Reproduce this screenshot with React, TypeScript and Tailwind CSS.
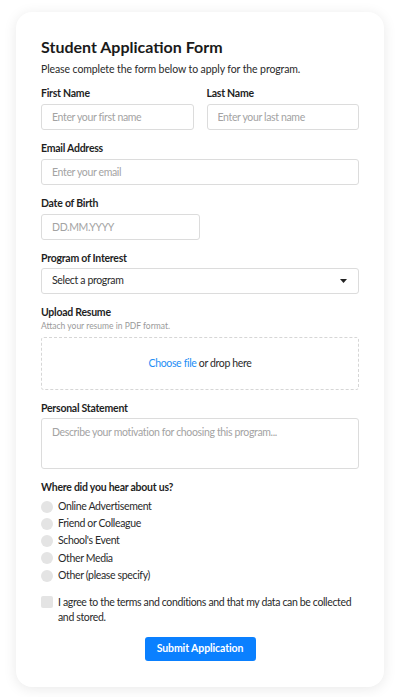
import React from "react";

const font = { fontFamily: "Lato, 'Noto Sans', 'Liberation Sans', sans-serif" };

const inputCls =
  "w-full h-[26px] rounded-[3px] border border-[#dcdcdc] bg-white px-[10px] text-[10.5px] tracking-[-0.35px] text-[#333] placeholder:text-[#a3a3a3] outline-none";

function Label({ children }: { children: React.ReactNode }) {
  return (
    <div className="text-[10.5px] font-bold tracking-[-0.25px] leading-[14px] text-[#1f1f1f] mb-[3px]">{children}</div>
  );
}

const sources = [
  "Online Advertisement",
  "Friend or Colleague",
  "School's Event",
  "Other Media",
  "Other (please specify)",
];

export default function App() {
  return (
    <div className="min-h-[697px] bg-white pt-[12px] px-[16px] pb-[11px]" style={font}>
      <form className="rounded-[16px] bg-white shadow-[0_2px_14px_rgba(0,0,0,0.09)] px-[25px] pt-[24px] pb-[26px]">
        <h1 className="text-[16px] font-bold leading-[22px] text-[#1a1a1a]">Student Application Form</h1>
        <p className="mt-[3px] text-[10.5px] tracking-[-0.1px] leading-[16px] text-[#2a2a2a]">
          Please complete the form below to apply for the program.
        </p>

        {/* name row */}
        <div className="mt-[9px] grid grid-cols-2 gap-[13px]">
          <div>
            <Label>First Name</Label>
            <input className={inputCls} placeholder="Enter your first name" />
          </div>
          <div>
            <Label>Last Name</Label>
            <input className={inputCls} placeholder="Enter your last name" />
          </div>
        </div>

        <div className="mt-[11px]">
          <Label>Email Address</Label>
          <input className={inputCls} placeholder="Enter your email" />
        </div>

        <div className="mt-[11px]">
          <Label>Date of Birth</Label>
          <input className={inputCls + " !w-[159px]"} placeholder="DD.MM.YYYY" />
        </div>

        <div className="mt-[11px]">
          <Label>Program of Interest</Label>
          <div className="flex h-[26px] items-center justify-between rounded-[3px] border border-[#dcdcdc] bg-white pl-[10px] pr-[11px] text-[10.5px] tracking-[-0.35px] text-[#2a2a2a]">
            <span>Select a program</span>
            <svg width="7" height="4" viewBox="0 0 7 4">
              <path d="M0 0h7L3.5 4z" fill="#222" />
            </svg>
          </div>
        </div>

        <div className="mt-[11px]">
          <div className="text-[10.5px] font-bold tracking-[-0.25px] leading-[14px] text-[#1f1f1f]">Upload Resume</div>
          <div className="text-[8.5px] leading-[14px] text-[#9a9a9a]">Attach your resume in PDF format.</div>
          <div className="mt-[4px] flex h-[53px] items-center justify-center rounded-[3px] border border-dashed border-[#d6d6d6] text-[10.5px] tracking-[-0.35px] text-[#2a2a2a]">
            <span className="text-[#1e8ef5]">Choose file</span>
            <span>&nbsp;or drop here</span>
          </div>
        </div>

        <div className="mt-[11px]">
          <Label>Personal Statement</Label>
          <textarea
            className="block h-[51px] w-full resize-none rounded-[3px] border border-[#dcdcdc] bg-white px-[10px] py-[6px] text-[10.5px] tracking-[-0.35px] leading-[14px] text-[#333] placeholder:text-[#a3a3a3] outline-none"
            placeholder="Describe your motivation for choosing this program..."
          />
        </div>

        <div className="mt-[11px]">
          <div className="text-[10.5px] font-bold tracking-[-0.25px] leading-[14px] text-[#1f1f1f] mb-[4px]">
            Where did you hear about us?
          </div>
          {sources.map((s) => (
            <label
              key={s}
              className="flex h-[17.25px] items-center gap-[5px] text-[10.5px] tracking-[-0.35px] text-[#2a2a2a]"
            >
              <span className="h-[12px] w-[12px] shrink-0 rounded-full bg-[#e4e4e4]" />
              {s}
            </label>
          ))}
        </div>

        <label className="mt-[11px] flex items-start gap-[5px] text-[10.5px] tracking-[-0.35px] leading-[15px] text-[#2a2a2a]">
          <span className="mt-[1px] h-[12px] w-[12px] shrink-0 rounded-[2px] bg-[#e4e4e4]" />
          <span>I agree to the terms and conditions and that my data can be collected and stored.</span>
        </label>

        <div className="mt-[12px] flex justify-center">
          <button
            type="button"
            className="h-[24px] w-[111px] rounded-[3px] bg-[#0a80ff] text-[10.5px] tracking-[-0.1px] font-bold text-white"
          >
            Submit Application
          </button>
        </div>
      </form>
    </div>
  );
}
